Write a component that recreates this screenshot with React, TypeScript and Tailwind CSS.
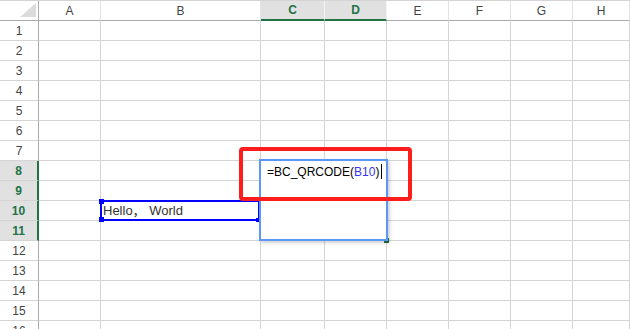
import React from "react";

const FONT = { fontFamily: '"Liberation Sans", "Noto Sans CJK SC", Arial, sans-serif' };

const columns = [
  { label: "A", selected: false },
  { label: "B", selected: false },
  { label: "C", selected: true },
  { label: "D", selected: true },
  { label: "E", selected: false },
  { label: "F", selected: false },
  { label: "G", selected: false },
  { label: "H", selected: false },
];

const rows = Array.from({ length: 16 }, (_, i) => i + 1);
const selectedRows = [8, 9, 10, 11];

const ColumnHeader = ({ label, selected }: { label: string; selected: boolean }) => (
  <div
    className={
      selected
        ? "h-[20px] flex items-center justify-center bg-[#e1e1e1] border-r border-r-[#f3f3f3] border-b-2 border-b-[#217346] text-[12px] font-bold text-[#217346]"
        : "h-[20px] flex items-center justify-center bg-white border-r border-r-[#e3e3e3] border-b border-b-[#ababab] text-[12px] text-[#444]"
    }
  >
    {label}
  </div>
);

const RowHeader = ({ n }: { n: number }) => {
  const selected = selectedRows.includes(n);
  return (
    <div
      className={
        selected
          ? "h-[20px] flex items-center justify-center bg-[#e1e1e1] border-b border-b-[#d4d4d4] border-r-2 border-r-[#217346] text-[12px] font-bold text-[#217346]"
          : "h-[20px] flex items-center justify-center bg-white border-b border-b-[#d4d4d4] border-r border-r-[#ababab] text-[12px] text-[#444]"
      }
    >
      {n}
    </div>
  );
};

export default function App() {
  return (
    <div className="relative w-[630px] h-[329px] overflow-hidden bg-white" style={FONT}>
      {/* sheet grid */}
      <div className="grid grid-cols-[39px_62px_160px_64px_62px_62px_62px_62px_1fr] border-t border-t-[#d4d4d4]">
        {/* corner */}
        <div className="h-[20px] flex items-end justify-end pr-[2px] pb-[3px] border-r border-r-[#ababab] border-b border-b-[#ababab]">
          <svg width="16" height="14" viewBox="0 0 16 14">
            <polygon points="16,0 16,14 0,14" fill="#dcdcdc" />
          </svg>
        </div>
        {columns.map((c) => (
          <ColumnHeader key={c.label} label={c.label} selected={c.selected} />
        ))}

        {rows.map((n) => (
          <React.Fragment key={n}>
            <RowHeader n={n} />
            {columns.map((c) => (
              <div
                key={c.label}
                className="h-[20px] flex items-center pl-[2px] border-r border-b border-[#d4d4d4] text-[13px] text-[#333] whitespace-nowrap"
              >
                {n === 10 && c.label === "B" ? "Hello， World" : null}
              </div>
            ))}
          </React.Fragment>
        ))}
      </div>

      {/* B10 reference highlight */}
      <div className="absolute left-[100px] top-[200px] w-[160px] h-[21px] border-2 border-[#0000ff]" />
      <div className="absolute left-[99px] top-[199px] w-[5px] h-[5px] bg-[#0000ff]" />
      <div className="absolute left-[99px] top-[217px] w-[5px] h-[5px] bg-[#0000ff]" />
      <div className="absolute left-[256px] top-[218px] w-[4px] h-[4px] bg-[#0000ff]" />

      {/* fill handle */}
      <div className="absolute left-[384px] top-[238px] w-[5px] h-[5px] bg-[#217346]" />

      {/* in-cell editor */}
      <div className="absolute left-[259px] top-[159px] w-[129px] h-[82px] border-2 border-[#5b98f5] bg-white shadow-[2px_2px_3px_rgba(0,0,0,0.18)] pl-[6px] pt-[3px]">
        <div className="flex items-center text-[12px] leading-[14px] text-black whitespace-nowrap">
          <span>=BC_QRCODE(</span>
          <span className="text-[#3434f0]">B10</span>
          <span>)</span>
          <span className="ml-[2px] w-px h-[15px] bg-black" />
        </div>
      </div>

      {/* annotation */}
      <div className="absolute left-[239px] top-[147px] w-[173px] h-[54px] border-[4px] border-[#fe1d1d] rounded-[4px]" />
    </div>
  );
}
